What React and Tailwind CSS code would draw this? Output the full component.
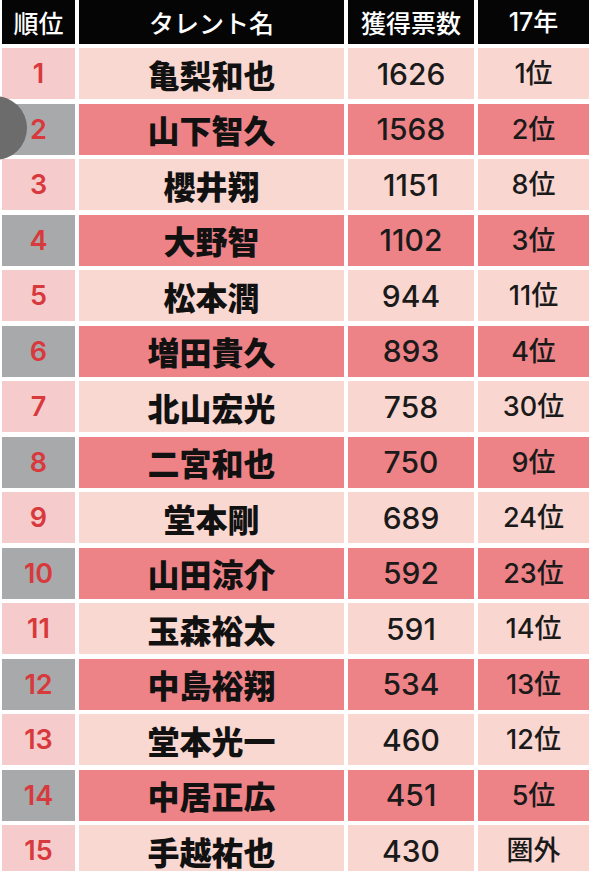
import React from "react";

const rows = [
  ["亀梨和也", "1626", "1位"],
  ["山下智久", "1568", "2位"],
  ["櫻井翔", "1151", "8位"],
  ["大野智", "1102", "3位"],
  ["松本潤", "944", "11位"],
  ["増田貴久", "893", "4位"],
  ["北山宏光", "758", "30位"],
  ["二宮和也", "750", "9位"],
  ["堂本剛", "689", "24位"],
  ["山田涼介", "592", "23位"],
  ["玉森裕太", "591", "14位"],
  ["中島裕翔", "534", "13位"],
  ["堂本光一", "460", "12位"],
  ["中居正広", "451", "5位"],
  ["手越祐也", "430", "圏外"],
];

const font = { fontFamily: '"Noto Sans CJK JP", "Noto Sans", sans-serif' };
const numFont = { fontFamily: 'Inter, "Noto Sans CJK JP", sans-serif' };

const App = () => {
  return (
    <div
      className="relative w-[591px] h-[871px] overflow-hidden bg-white pl-[2px]"
      style={font}
    >
      {/* header */}
      <div className="grid grid-cols-[73px_265px_126px_111px] gap-x-[4px] h-[44px] text-white text-[25px] font-medium leading-none">
        <div className="bg-[#050505] flex items-center justify-center">順位</div>
        <div className="bg-[#050505] flex items-center justify-center">タレント名</div>
        <div className="bg-[#050505] flex items-center justify-center">獲得票数</div>
        <div className="bg-[#050505] flex items-center justify-center" style={numFont}>
          17年
        </div>
      </div>

      {/* rows */}
      <div className="mt-[4px] flex flex-col gap-[4.5px]">
        {rows.map((row, index) => {
          const dark = index % 2 === 1;
          return (
            <div
              key={index}
              className="grid grid-cols-[73px_265px_126px_111px] gap-x-[4px] h-[51px] leading-none"
            >
              <div
                className={`flex items-center justify-center text-[27px] font-semibold text-[#d8393d] ${
                  dark ? "bg-[#a8a9ab]" : "bg-[#f6cbcb]"
                }`}
                style={numFont}
              >
                {index + 1}
              </div>
              <div
                className={`flex items-center justify-center text-[32px] font-black text-[#111] ${
                  dark ? "bg-[#ee8387]" : "bg-[#f9d8d1]"
                }`}
              >
                {row[0]}
              </div>
              <div
                className={`flex items-center justify-center text-[30px] font-medium text-[#1a1a1a] ${
                  dark ? "bg-[#ee8387]" : "bg-[#f9d6d0]"
                }`}
                style={numFont}
              >
                {row[1]}
              </div>
              <div
                className={`flex items-center justify-center text-[27px] font-medium text-[#1a1a1a] ${
                  dark ? "bg-[#ee8387]" : "bg-[#f9d6d0]"
                }`}
                style={numFont}
              >
                {row[2]}
              </div>
            </div>
          );
        })}
      </div>

      {/* gray touch marker over the left edge */}
      <div className="absolute left-[-37px] top-[96px] w-[64px] h-[64px] rounded-full bg-[#6c6c6c]" />
    </div>
  );
};

export default App;
